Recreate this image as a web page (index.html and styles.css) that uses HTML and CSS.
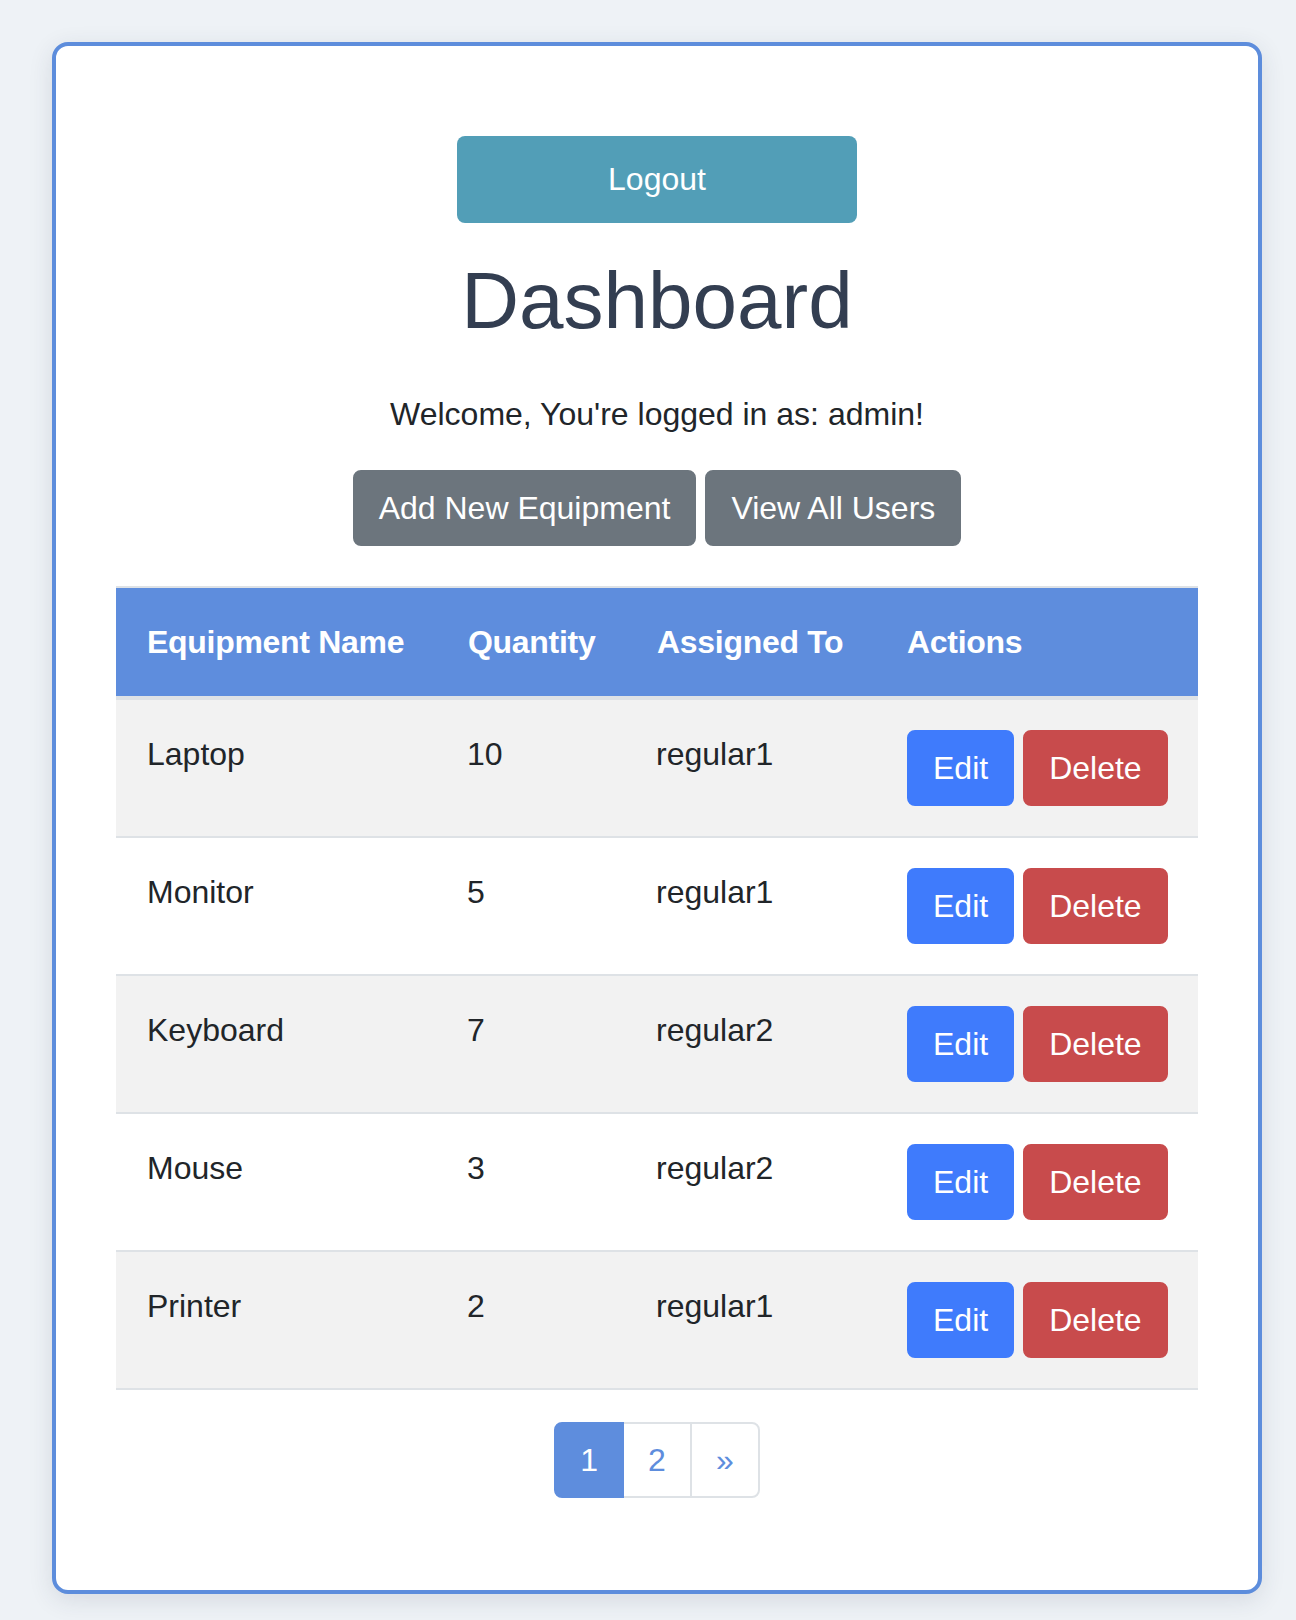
FILE: index.html
```html
<!DOCTYPE html>
<html lang="en">
<head>
<meta charset="utf-8">
<title>Dashboard</title>
<link rel="stylesheet" href="styles.css">
</head>
<body>
<div class="card">
  <div class="top">
    <button class="btn btn-logout">Logout</button>
    <h1 class="title">Dashboard</h1>
    <p class="welcome">Welcome, You're logged in as: admin!</p>
    <div class="actions-bar">
      <button class="btn btn-secondary">Add New Equipment</button>
      <button class="btn btn-secondary">View All Users</button>
    </div>
  </div>
  <table class="equip-table">
    <colgroup>
      <col class="c1"><col class="c2"><col class="c3"><col class="c4">
    </colgroup>
    <thead>
      <tr><th>Equipment Name</th><th>Quantity</th><th>Assigned To</th><th>Actions</th></tr>
    </thead>
    <tbody>
      <tr class="odd"><td>Laptop</td><td>10</td><td>regular1</td><td><div class="row-btns"><button class="btn btn-edit">Edit</button><button class="btn btn-delete">Delete</button></div></td></tr>
      <tr><td>Monitor</td><td>5</td><td>regular1</td><td><div class="row-btns"><button class="btn btn-edit">Edit</button><button class="btn btn-delete">Delete</button></div></td></tr>
      <tr class="odd"><td>Keyboard</td><td>7</td><td>regular2</td><td><div class="row-btns"><button class="btn btn-edit">Edit</button><button class="btn btn-delete">Delete</button></div></td></tr>
      <tr><td>Mouse</td><td>3</td><td>regular2</td><td><div class="row-btns"><button class="btn btn-edit">Edit</button><button class="btn btn-delete">Delete</button></div></td></tr>
      <tr class="odd"><td>Printer</td><td>2</td><td>regular1</td><td><div class="row-btns"><button class="btn btn-edit">Edit</button><button class="btn btn-delete">Delete</button></div></td></tr>
    </tbody>
  </table>
  <ul class="pagination">
    <li class="page active"><span>1</span></li>
    <li class="page"><span>2</span></li>
    <li class="page"><span>&raquo;</span></li>
  </ul>
</div>
</body>
</html>
```

FILE: styles.css
```css
* { box-sizing: border-box; }

html, body {
  margin: 0;
  padding: 0;
}

body {
  background: #eef2f6;
  font-family: "Liberation Sans", Arial, Helvetica, sans-serif;
  color: #212529;
  padding: 42px 34px 26px 52px;
}

.card {
  width: 1210px;
  background: #ffffff;
  border: 4px solid #5d8ddc;
  border-radius: 16px;
  padding: 60px;
  box-shadow: 0 6px 24px rgba(40, 50, 70, 0.12);
}

.top {
  display: flex;
  flex-direction: column;
  align-items: center;
}

.btn {
  font-family: "Liberation Sans", Arial, Helvetica, sans-serif;
  font-size: 32px;
  line-height: 48px;
  padding: 12px 24px;
  border: 2px solid transparent;
  border-radius: 8px;
  color: #ffffff;
  cursor: pointer;
  white-space: nowrap;
}

.btn-logout {
  margin-top: 30px;
  width: 400px;
  height: 87px;
  padding: 0;
  border: 0;
  line-height: 87px;
  background: #529eb7;
}

.title {
  margin: 30px 0 0;
  font-size: 80px;
  line-height: 96px;
  font-weight: 400;
  color: #333e51;
}

.welcome {
  margin: 41px 0 32px;
  font-size: 32px;
  line-height: 48px;
  color: #212529;
}

.actions-bar {
  display: flex;
  gap: 9px;
  margin-bottom: 40px;
}

.btn-secondary {
  background: #6c757d;
  border-color: #6c757d;
}

.equip-table {
  width: 1082px;
  border-collapse: separate;
  border-spacing: 0;
  table-layout: fixed;
  font-size: 32px;
  line-height: 48px;
}

.c1 { width: 320px; }
.c2 { width: 189px; }
.c3 { width: 250px; }
.c4 { width: 323px; }

.equip-table th {
  background: #5e8ddd;
  color: #ffffff;
  font-weight: 700;
  text-align: left;
  padding: 30px 0 30px 32px;
  border-top: 2px solid #dee2e6;
  border-bottom: 4px solid #dee2e6;
  vertical-align: top;
  white-space: nowrap;
  letter-spacing: -0.3px;
}

.equip-table th:first-child {
  padding-left: 31px;
}

.equip-table td {
  padding: 30px 0 30px 31px;
  border-bottom: 2px solid #dee2e6;
  vertical-align: top;
  white-space: nowrap;
}

.equip-table td:last-child {
  padding-left: 32px;
}

.equip-table tr.odd td {
  background: #f2f2f2;
}

.row-btns {
  display: flex;
  gap: 9px;
}

.btn-edit {
  background: #3f7bfc;
  border-color: #3f7bfc;
}

.btn-delete {
  background: #c84b4c;
  border-color: #c84b4c;
}

.pagination {
  list-style: none;
  display: flex;
  justify-content: center;
  margin: 32px 0 32px;
  padding: 0;
}

.page span {
  display: block;
  font-size: 32px;
  line-height: 40px;
  padding: 16px 24px;
  border: 2px solid #dee2e6;
  color: #5e8ddd;
  background: #ffffff;
  margin-left: -2px;
}

.page:first-child span {
  margin-left: 0;
  border-radius: 8px 0 0 8px;
}

.page:last-child span {
  border-radius: 0 8px 8px 0;
}

.page.active span {
  background: #5e8ddd;
  border-color: #5e8ddd;
  color: #ffffff;
  position: relative;
  z-index: 1;
}
```
